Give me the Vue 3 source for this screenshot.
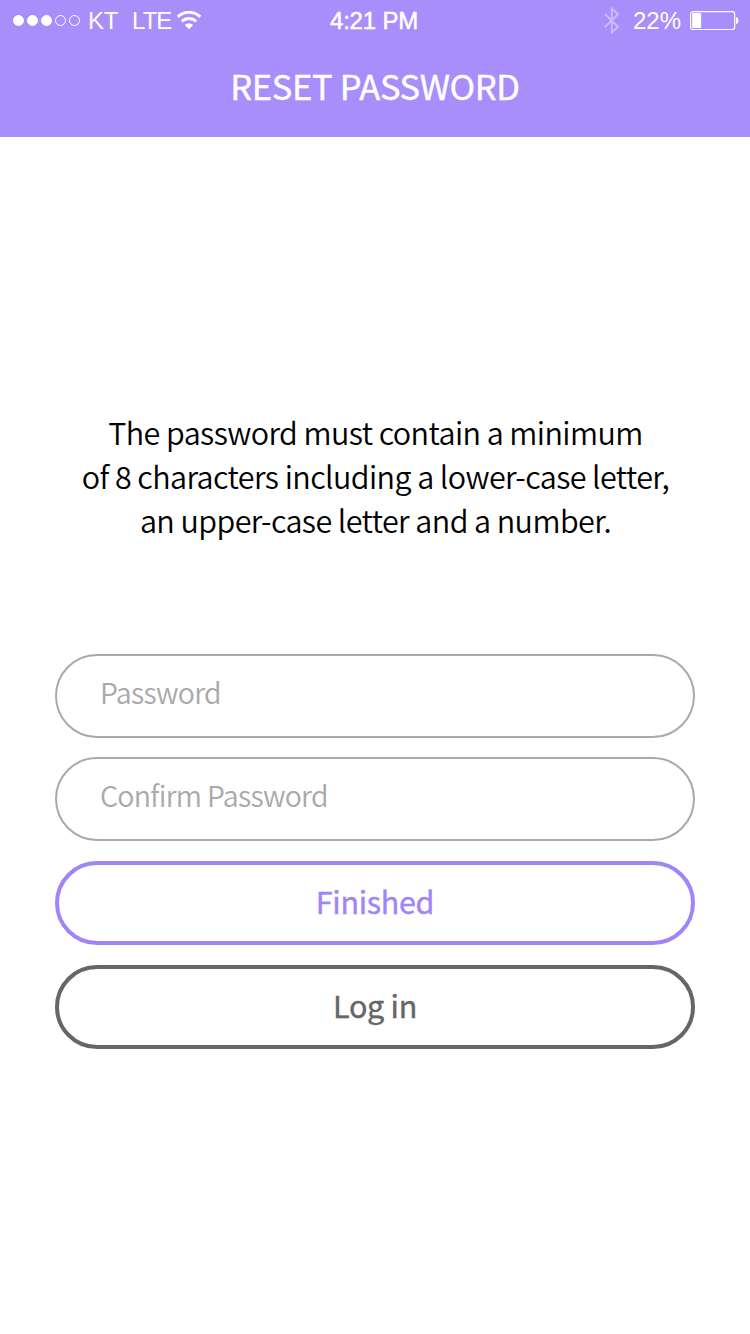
<script setup>
import { ref } from 'vue'

const signal = [true, true, true, false, false]
const lines = [
  'The password must contain a minimum',
  'of 8 characters including a lower-case letter,',
  'an upper-case letter and a number.',
]
const password = ref('')
const confirmation = ref('')
</script>

<template>
  <main class="screen">
    <header class="header">
      <div class="status">
        <div class="status-left">
          <span class="dots">
            <i v-for="(on, i) in signal" :key="i" class="dot" :class="{ on }"></i>
          </span>
          <span class="carrier">KT</span>
          <span class="network">LTE</span>
          <svg class="wifi" width="26" height="20" viewBox="0 0 26 20" fill="none" stroke="#fff">
            <path d="M1.8 5.9a16 16 0 0 1 22.4 0" stroke-width="2.9" />
            <path d="M5.8 10.4a10.3 10.3 0 0 1 14.4 0" stroke-width="2.9" />
            <path d="M8.9 14a5.9 5.9 0 0 1 8.2 0L13 18.2z" fill="#fff" stroke="none" />
          </svg>
        </div>
        <span class="time">4:21 PM</span>
        <div class="status-right">
          <svg class="bluetooth" width="16" height="28" viewBox="0 0 16 28" fill="none" stroke="#fff" stroke-width="1.9">
            <path d="M1 7L14 19.7L7.8 25.5V1.5L14 7.3L1 20" />
          </svg>
          <span class="percent">22%</span>
          <svg class="battery" width="50" height="20" viewBox="0 0 50 20">
            <rect x=".6" y=".6" width="44.1" height="17.9" rx="2.6" fill="none" stroke="#fff" stroke-width="1.2" />
            <rect x="2.2" y="2.1" width="9" height="15" rx="1" fill="#fff" />
            <path d="M46 6.1a3.8 3.8 0 0 1 0 7.2z" fill="#fff" />
          </svg>
        </div>
      </div>
      <h1 class="title">RESET PASSWORD</h1>
    </header>

    <p class="hint">
      <span v-for="(line, i) in lines" :key="i" class="line">{{ line }}</span>
    </p>

    <form class="form" @submit.prevent>
      <input v-model="password" class="field" type="password" placeholder="Password" />
      <input v-model="confirmation" class="field second" type="password" placeholder="Confirm Password" />
      <button class="button finish" type="submit">Finished</button>
      <button class="button login" type="button">Log in</button>
    </form>
  </main>
</template>

<style>
body {
  margin: 0;
  background: #fff;
}
</style>

<style scoped>
.screen {
  box-sizing: border-box;
  width: 750px;
  height: 1334px;
  overflow: hidden;
  background: #fff;
  font-family: "Noto Sans CJK KR", "Noto Sans CJK SC", sans-serif;
}
.header {
  height: 137px;
  background: #a78efa;
  color: #fff;
}
.status {
  display: grid;
  grid-template-columns: 1fr auto 1fr;
  align-items: center;
  height: 42px;
  padding: 0 10px 0 13px;
  font: 24px/42px "Liberation Sans", Arial, sans-serif;
}
.status-left,
.status-right {
  display: flex;
  align-items: center;
  height: 42px;
}
.status-right {
  justify-content: flex-end;
}
.dots {
  display: flex;
  gap: 3px;
  margin-top: -1px;
}
.dot {
  box-sizing: border-box;
  width: 11px;
  height: 11px;
  border: 1px solid #fff;
  border-radius: 50%;
}
.dot.on {
  background: #fff;
}
.carrier {
  margin-left: 8px;
  letter-spacing: -0.3px;
}
.network {
  margin-left: 14px;
  letter-spacing: -1px;
}
.wifi {
  margin-left: 4.5px;
}
.time {
  margin-right: 5px;
  letter-spacing: -0.2px;
  -webkit-text-stroke: 0.5px #fff;
}
.bluetooth {
  opacity: 0.4;
}
.percent {
  margin-left: 13px;
}
.battery {
  margin-left: 9px;
}
.title {
  margin: 17px 0 0;
  font-size: 34.5px;
  font-weight: 400;
  line-height: 52px;
  letter-spacing: -0.35px;
  text-align: center;
  -webkit-text-stroke: 0.4px;
}
.hint {
  margin: 273px 0 0;
  padding-left: 1px;
  color: #000;
  font-size: 30.5px;
  font-weight: 350;
  line-height: 44px;
  letter-spacing: -0.57px;
  text-align: center;
}
.line {
  display: block;
  white-space: nowrap;
}
.form {
  display: flex;
  flex-direction: column;
  gap: 20px;
  margin: 112px 55px 0;
}
.field,
.button {
  box-sizing: border-box;
  width: 640px;
  height: 84px;
  margin: 0;
  border-radius: 42px;
  background: #fff;
  font-family: inherit;
}
.field {
  padding: 0 43px 10px;
  border: 2px solid #a9a9a9;
  outline: none;
  font-size: 28.5px;
  font-weight: 350;
  letter-spacing: -0.7px;
}
.field::placeholder {
  color: #a9a9a9;
  opacity: 1;
}
.second {
  margin-top: -1px;
}
.button {
  padding: 0 0 5px;
  border: 4px solid;
  font-size: 30.5px;
  font-weight: 400;
  letter-spacing: -0.3px;
  -webkit-text-stroke: 0.4px;
}
.finish {
  border-color: #a085f9;
  color: #a085f9;
}
.login {
  border-color: #666;
  color: #666;
}
</style>
